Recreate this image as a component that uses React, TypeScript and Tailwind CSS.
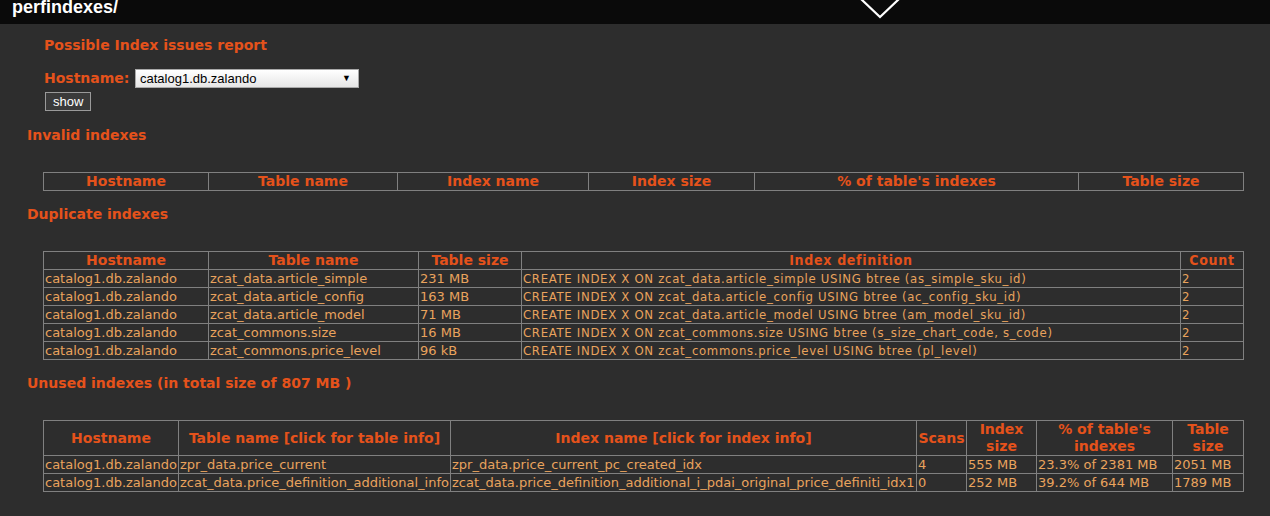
import React from "react";

const HOST = "catalog1.db.zalando";

const DUPLICATES = [
  ["zcat_data.article_simple", "231 MB", "CREATE INDEX X ON zcat_data.article_simple USING btree (as_simple_sku_id)", "2"],
  ["zcat_data.article_config", "163 MB", "CREATE INDEX X ON zcat_data.article_config USING btree (ac_config_sku_id)", "2"],
  ["zcat_data.article_model", "71 MB", "CREATE INDEX X ON zcat_data.article_model USING btree (am_model_sku_id)", "2"],
  ["zcat_commons.size", "16 MB", "CREATE INDEX X ON zcat_commons.size USING btree (s_size_chart_code, s_code)", "2"],
  ["zcat_commons.price_level", "96 kB", "CREATE INDEX X ON zcat_commons.price_level USING btree (pl_level)", "2"],
];

const UNUSED = [
  ["zpr_data.price_current", "zpr_data.price_current_pc_created_idx", "4", "555 MB", "23.3% of 2381 MB", "2051 MB"],
  [
    "zcat_data.price_definition_additional_info",
    "zcat_data.price_definition_additional_i_pdai_original_price_definiti_idx1",
    "0",
    "252 MB",
    "39.2% of 644 MB",
    "1789 MB",
  ],
];

const th = "border border-[#808080] text-[#e5521b] font-bold text-[14px] leading-[17px] text-center align-middle px-px";
const td = "border border-[#808080] text-[#e9a35d] text-[13px] leading-[17px] text-left px-px whitespace-nowrap overflow-hidden";
const cond = "font-['DejaVu_Sans_Condensed','DejaVu_Sans',sans-serif] [font-stretch:condensed] tracking-[0.7px]";

function Heading({ children, className = "" }: { children: React.ReactNode; className?: string }) {
  return <h3 className={`text-[#e5521b] font-bold text-[14px] leading-[17px] ${className}`}>{children}</h3>;
}

export default function App() {
  return (
    <div className="min-h-screen bg-[#2d2d2d] font-['DejaVu_Sans',sans-serif] overflow-hidden">
      {/* top bar */}
      <div className="h-6 bg-[#0a0a0a] relative overflow-hidden">
        <div className="pl-3 -mt-[5px] text-white font-bold text-[18px] leading-[24px] font-['Liberation_Sans',Arial,sans-serif]">
          perfindexes/
        </div>
        <svg className="absolute left-[858px] top-0" width="44" height="22" viewBox="0 0 44 22">
          <path d="M3 -1 L22 17 L41 -1" fill="none" stroke="#ffffff" strokeWidth="2.2" />
        </svg>
      </div>

      {/* form */}
      <div className="pl-[44px] pt-[13px]">
        <Heading>Possible Index issues report</Heading>
        <div className="flex items-center mt-[15px] h-[19px]">
          <span className="text-[#e5521b] font-bold text-[14px] leading-[17px] w-[91px]">Hostname:</span>
          <div className="w-[224px] h-[19px] border border-[#a9a9a9] bg-gradient-to-b from-white to-[#e6e6e6] flex items-center justify-between pl-[4px] pr-[7px] font-['Liberation_Sans',Arial,sans-serif] text-[13px] text-black">
            <span>{HOST}</span>
            <span className="text-[9px]">▼</span>
          </div>
        </div>
        <button className="mt-[4px] ml-px h-[19px] px-[7px] border border-[#9a9a9a] bg-[#3a3a3a] text-white text-[13px] leading-[15px] font-['Liberation_Sans',Arial,sans-serif]">
          show
        </button>
      </div>

      <div className="pl-[27px]">
        <Heading className="mt-[14px]">Invalid indexes</Heading>
        <table className="mt-[28px] ml-4 w-[1200px] table-fixed border-collapse">
          <colgroup>
            <col className="w-[165px]" />
            <col className="w-[189px]" />
            <col className="w-[191px]" />
            <col className="w-[166px]" />
            <col className="w-[324px]" />
            <col className="w-[165px]" />
          </colgroup>
          <thead>
            <tr>
              <th className={th}>Hostname</th>
              <th className={th}>Table name</th>
              <th className={th}>Index name</th>
              <th className={th}>Index size</th>
              <th className={th}>% of table's indexes</th>
              <th className={th}>Table size</th>
            </tr>
          </thead>
        </table>

        <Heading className="mt-[15px]">Duplicate indexes</Heading>
        <table className="mt-[28px] ml-4 w-[1200px] table-fixed border-collapse">
          <colgroup>
            <col className="w-[165px]" />
            <col className="w-[210px]" />
            <col className="w-[103px]" />
            <col className="w-[659px]" />
            <col className="w-[63px]" />
          </colgroup>
          <thead>
            <tr>
              <th className={th}>Hostname</th>
              <th className={th}>Table name</th>
              <th className={th}>Table size</th>
              <th className={`${th} ${cond}`}>Index definition</th>
              <th className={`${th} ${cond}`}>Count</th>
            </tr>
          </thead>
          <tbody>
            {DUPLICATES.map((r) => (
              <tr key={r[0]}>
                <td className={td}>{HOST}</td>
                <td className={td}>{r[0]}</td>
                <td className={td}>{r[1]}</td>
                <td className={`${td} ${cond}`}>{r[2]}</td>
                <td className={`${td} ${cond}`}>{r[3]}</td>
              </tr>
            ))}
          </tbody>
        </table>

        <Heading className="mt-[15px]">Unused indexes (in total size of 807 MB )</Heading>
        <table className="mt-[28px] ml-4 w-[1200px] table-fixed border-collapse">
          <colgroup>
            <col className="w-[135px]" />
            <col className="w-[272px]" />
            <col className="w-[466px]" />
            <col className="w-[50px]" />
            <col className="w-[70px]" />
            <col className="w-[136px]" />
            <col className="w-[71px]" />
          </colgroup>
          <thead>
            <tr>
              <th className={th}>Hostname</th>
              <th className={th}>Table name [click for table info]</th>
              <th className={th}>Index name [click for index info]</th>
              <th className={th}>Scans</th>
              <th className={th}>Index size</th>
              <th className={th}>% of table's indexes</th>
              <th className={th}>Table size</th>
            </tr>
          </thead>
          <tbody>
            {UNUSED.map((r) => (
              <tr key={r[1]}>
                <td className={td}>{HOST}</td>
                {r.map((c, i) => (
                  <td key={i} className={td}>
                    {c}
                  </td>
                ))}
              </tr>
            ))}
          </tbody>
        </table>
      </div>
    </div>
  );
}
